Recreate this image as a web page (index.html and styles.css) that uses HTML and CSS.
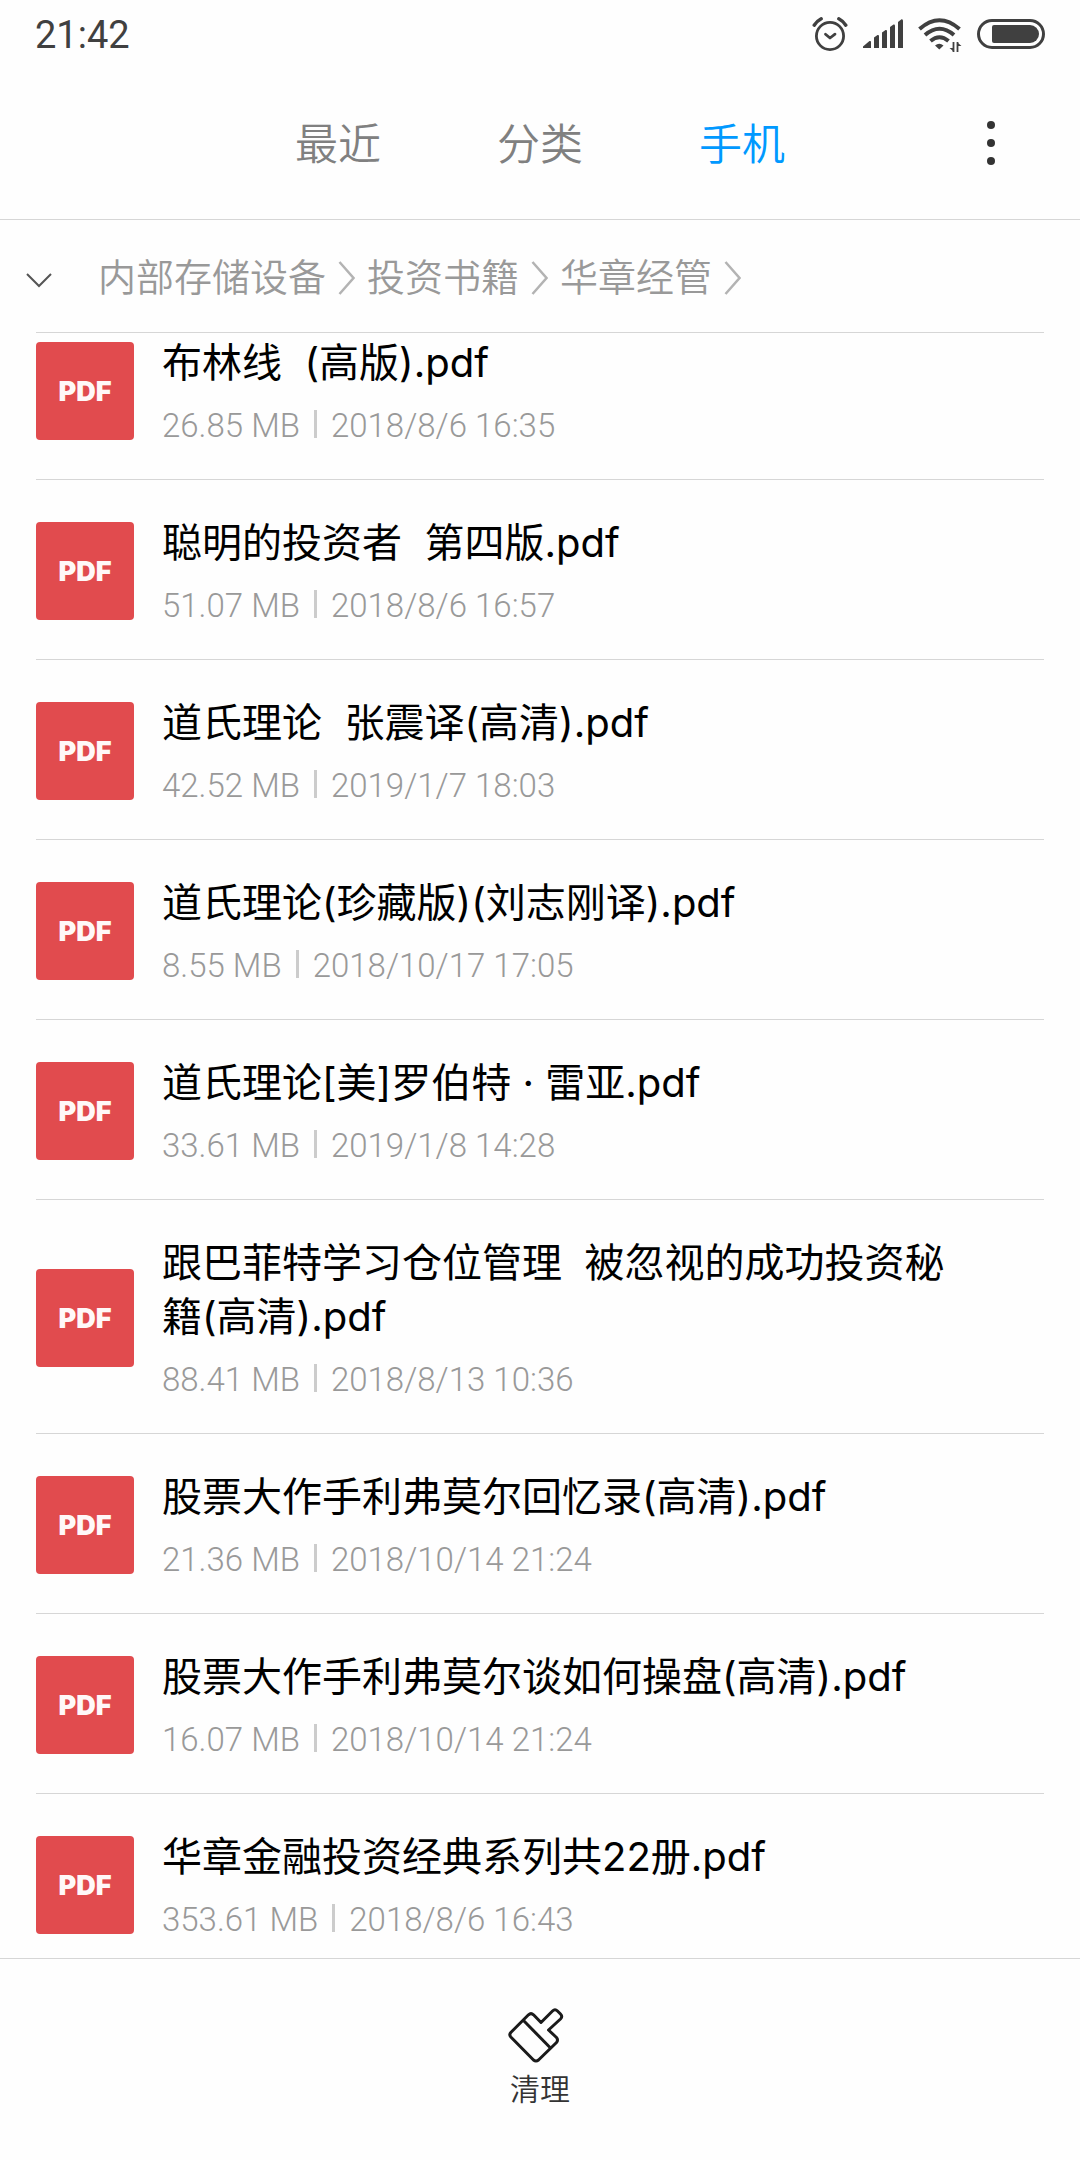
FILE: index.html
```html
<!DOCTYPE html>
<html lang="zh-CN">

<head>
  <meta charset="UTF-8">
  <meta name="viewport" content="width=device-width, initial-scale=1">
  <title>文件管理</title>
  <link rel="stylesheet" href="styles.css">
</head>

<body>

  <svg class="sprite" aria-hidden="true">
    <symbol id="chevron" viewBox="0 0 17 34">
      <path d="M1.500 1 L15.500 17 L1.500 33" fill="none" stroke="currentColor" stroke-width="2.500" />
    </symbol>
  </svg>

  <div class="status-bar">
    <span class="time">21:42</span>
    <div class="status-icons">
      <svg width="36" height="36" viewBox="0 0 36 36" fill="none" stroke="currentColor" stroke-width="2.800" stroke-linecap="round">
        <circle cx="18" cy="20" r="13.600" />
        <path d="M13.500 18.200 L18 22 L23 18.200" stroke-linejoin="round" />
        <path d="M2.200 9.200 Q5 5 9.200 2.800 M26.800 2.800 Q31 5 33.800 9.200" stroke-width="3.400" />
      </svg>
      <svg class="signal" width="40" height="36" viewBox="0 0 40 36" fill="currentColor">
        <path d="M0 32 V30.500 L6.500 25 Q8 24.500 8 26 V32Z" />
        <path d="M11 32 V21.500 L14.500 19 Q16 18.600 16 20 V32Z" />
        <path d="M19 32 V16.500 L22.500 14 Q24 13.600 24 15 V32Z" />
        <path d="M27 32 V11 L30.500 8.600 Q32 8.200 32 10 V32Z" />
        <path d="M35 32 V6 L38.500 3.200 Q40 2.800 40 5 V32Z" />
      </svg>
      <svg class="wifi" width="44" height="36" viewBox="0 0 44 36" fill="none" stroke="currentColor" stroke-width="4">
        <path d="M1.500 13 Q21.500 -4.500 41.500 13" />
        <path d="M7 19 Q21.500 6.500 36 19" />
        <path d="M12.500 25 Q21.500 17.500 30.500 25" />
        <path d="M17 29.500 Q21.300 26 25.500 29.500 L21.300 33.500Z" fill="currentColor" stroke="none" />
        <path d="M35.500 26 V36 M39.500 26 V36" stroke-width="1.800" />
        <path d="M35 32 H31.500 L35 35Z M40 30 H43.500 L40 27Z" fill="currentColor" stroke="none" />
      </svg>
      <svg class="battery" width="68" height="30" viewBox="0 0 68 30">
        <rect x="1.500" y="1.500" width="65" height="27" rx="13.500" fill="none" stroke="currentColor" stroke-width="3" />
        <path d="M17 6 H53 A9 9 0 0 1 53 24 H17 Q15 24 15 22 V8 Q15 6 17 6Z" fill="currentColor" />
      </svg>
    </div>
  </div>

  <header class="header">
    <nav class="tabs">
      <a class="tab" href="#recent">最近</a>
      <a class="tab" href="#category">分类</a>
      <a class="tab active" href="#phone">手机</a>
    </nav>
    <button class="more" aria-label="更多">
      <svg width="8" height="44" viewBox="0 0 8 44" fill="currentColor">
        <circle cx="4" cy="4" r="4" />
        <circle cx="4" cy="22" r="4" />
        <circle cx="4" cy="40" r="4" />
      </svg>
    </button>
  </header>

  <nav class="path">
    <button class="expand" aria-label="展开">
      <svg width="26" height="15" viewBox="0 0 26 15" fill="none" stroke="currentColor" stroke-width="2">
        <path d="M1 1 L13 13 L25 1" />
      </svg>
    </button>
    <a href="#storage">内部存储设备</a>
    <svg class="sep"><use href="#chevron" /></svg>
    <a href="#books">投资书籍</a>
    <svg class="sep"><use href="#chevron" /></svg>
    <a href="#huazhang">华章经管</a>
    <svg class="sep"><use href="#chevron" /></svg>
  </nav>

  <main class="files">
    <ul class="file-list">
      <li>
        <a class="file" href="#">
          <span class="badge">PDF</span>
          <div class="info">
            <div class="name">布林线  (高版).pdf</div>
            <div class="meta"><span>26.85 MB</span><span>2018/8/6 16:35</span></div>
          </div>
        </a>
      </li>
      <li>
        <a class="file" href="#">
          <span class="badge">PDF</span>
          <div class="info">
            <div class="name">聪明的投资者  第四版.pdf</div>
            <div class="meta"><span>51.07 MB</span><span>2018/8/6 16:57</span></div>
          </div>
        </a>
      </li>
      <li>
        <a class="file" href="#">
          <span class="badge">PDF</span>
          <div class="info">
            <div class="name">道氏理论  张震译(高清).pdf</div>
            <div class="meta"><span>42.52 MB</span><span>2019/1/7 18:03</span></div>
          </div>
        </a>
      </li>
      <li>
        <a class="file" href="#">
          <span class="badge">PDF</span>
          <div class="info">
            <div class="name">道氏理论(珍藏版)(刘志刚译).pdf</div>
            <div class="meta"><span>8.55 MB</span><span>2018/10/17 17:05</span></div>
          </div>
        </a>
      </li>
      <li>
        <a class="file" href="#">
          <span class="badge">PDF</span>
          <div class="info">
            <div class="name">道氏理论[美]罗伯特 · 雷亚.pdf</div>
            <div class="meta"><span>33.61 MB</span><span>2019/1/8 14:28</span></div>
          </div>
        </a>
      </li>
      <li>
        <a class="file" href="#">
          <span class="badge">PDF</span>
          <div class="info">
            <div class="name">跟巴菲特学习仓位管理  被忽视的成功投资秘籍(高清).pdf</div>
            <div class="meta"><span>88.41 MB</span><span>2018/8/13 10:36</span></div>
          </div>
        </a>
      </li>
      <li>
        <a class="file" href="#">
          <span class="badge">PDF</span>
          <div class="info">
            <div class="name">股票大作手利弗莫尔回忆录(高清).pdf</div>
            <div class="meta"><span>21.36 MB</span><span>2018/10/14 21:24</span></div>
          </div>
        </a>
      </li>
      <li>
        <a class="file" href="#">
          <span class="badge">PDF</span>
          <div class="info">
            <div class="name">股票大作手利弗莫尔谈如何操盘(高清).pdf</div>
            <div class="meta"><span>16.07 MB</span><span>2018/10/14 21:24</span></div>
          </div>
        </a>
      </li>
      <li>
        <a class="file" href="#">
          <span class="badge">PDF</span>
          <div class="info">
            <div class="name">华章金融投资经典系列共22册.pdf</div>
            <div class="meta"><span>353.61 MB</span><span>2018/8/6 16:43</span></div>
          </div>
        </a>
      </li>
    </ul>
  </main>

  <footer class="toolbar">
    <button class="clean">
      <svg width="56" height="56" viewBox="0 0 56 56" fill="none" stroke="currentColor" stroke-width="3" stroke-linejoin="round">
        <path d="M2.800 25.500 L20.500 7.800 Q23 5.500 25.500 7.800 L33 15.500 L44.500 4 Q47 1.500 49.500 4 L52.500 7 Q55 9.500 52.500 12 L40.500 23 L48.500 30.500 Q50.500 33 48.500 35.500 L30.500 53 Q28 55 25.500 53 L2.800 30 Q0.800 27.800 2.800 25.500Z" />
        <path d="M15.500 13.500 L42 40.500" />
      </svg>
      <span>清理</span>
    </button>
  </footer>

  <script>
    // the list opens slightly scrolled
    document.querySelector(".files").scrollTop = 33
  </script>
</body>

</html>
```
FILE: styles.css
```css
* {
  box-sizing: border-box;
}

body {
  margin: 0;
  height: 100vh;
  display: flex;
  flex-direction: column;
  font-family: Roboto, "Noto Sans CJK SC", sans-serif;
  background-color: #fefefe;
  color: #000000;
}

a {
  color: inherit;
  text-decoration: none;
}

button {
  padding: 0;
  border: 0 none;
  background: none;
  font: inherit;
  color: inherit;
  cursor: pointer;
}

svg {
  display: block;
  flex: none;
}

.sprite {
  display: none;
}

/* STATUS BAR */

.status-bar {
  flex: none;
  display: flex;
  justify-content: space-between;
  align-items: center;
  height: 67px;
  padding: 0 35px;
  color: #404040;
}

.time {
  padding-top: 2px;
  font-size: 38px;
  line-height: 44px;
}

.status-icons {
  display: flex;
  align-items: center;
  gap: 15px;
}

/* HEADER */

.header {
  flex: none;
  display: grid;
  grid-template-columns: 1fr auto 1fr;
  align-items: center;
  height: 153px;
  border-bottom: 1px solid #d6d6d6;
}

.tabs {
  grid-column: 2;
  display: flex;
  gap: 116px;
  padding-top: 4px;
}

.tab {
  font-size: 43px;
  line-height: 60px;
  font-weight: 350;
  color: #808080;
}

.tab.active {
  color: #0099ff;
}

.more {
  justify-self: end;
  padding: 12px 36px;
  margin-right: 49px;
  color: #333333;
}

/* PATH */

.path {
  flex: none;
  display: flex;
  align-items: center;
  gap: 12px;
  height: 113px;
  margin: 0 36px;
  padding-top: 4px;
  border-bottom: 1px solid #d6d6d6;
  font-size: 38px;
  line-height: 56px;
  font-weight: 350;
  color: #999999;
}

.expand {
  margin: 4px 34px 0 -10px;
  color: #555555;
}

.sep {
  width: 17px;
  height: 34px;
  color: #b3b3b3;
}

/* FILE LIST */

.files {
  flex: 1;
  min-height: 0;
  overflow-y: auto;
  scrollbar-width: none;
}

.file-list {
  margin: 0 36px;
  padding: 0;
  list-style: none;
}

.file {
  display: flex;
  align-items: center;
  gap: 28px;
  padding: 36px 80px 33px 0;
  border-bottom: 1px solid #d6d6d6;
}

.badge {
  flex: none;
  display: grid;
  place-items: center;
  width: 98px;
  height: 98px;
  border-radius: 4px;
  background-color: #e14b4e;
  font-family: Inter, sans-serif;
  font-size: 27px;
  font-weight: 900;
  color: #fff8f8;
}

.name {
  font-family: Inter, "Noto Sans CJK SC", sans-serif;
  font-size: 40px;
  line-height: 54px;
  white-space: pre-wrap;
}

.meta {
  display: flex;
  align-items: center;
  margin-top: 16px;
  font-size: 33px;
  line-height: 40px;
  font-weight: 300;
  color: #999999;
}

.meta span + span::before {
  content: "";
  display: inline-block;
  width: 3px;
  height: 28px;
  margin: 0 14px;
  vertical-align: -1px;
  background-color: #cccccc;
}

/* TOOLBAR */

.toolbar {
  flex: none;
  display: flex;
  justify-content: center;
  height: 202px;
  padding-top: 48px;
  border-top: 1px solid #d6d6d6;
}

.clean {
  display: flex;
  flex-direction: column;
  align-items: center;
  gap: 5px;
  height: 110px;
  font-size: 30px;
  line-height: 44px;
  font-weight: 350;
  color: #333333;
}

.clean svg {
  margin-right: 8px;
  color: #1a1a1a;
}
```
